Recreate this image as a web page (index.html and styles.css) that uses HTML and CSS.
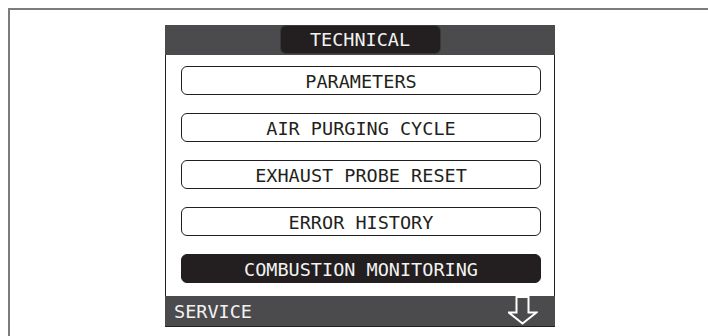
FILE: index.html
```html
<!DOCTYPE html>
<html>
<head>
<meta charset="utf-8">
<link rel="stylesheet" href="styles.css">
</head>
<body>
<div class="frame">
  <div class="screen">
    <div class="header"><div class="title">TECHNICAL</div></div>
    <div class="content">
      <div class="btn">PARAMETERS</div>
      <div class="btn">AIR PURGING CYCLE</div>
      <div class="btn">EXHAUST PROBE RESET</div>
      <div class="btn">ERROR HISTORY</div>
      <div class="btn selected">COMBUSTION MONITORING</div>
    </div>
    <div class="footer">
      <span class="service">SERVICE</span>
      <svg class="arrow" width="30" height="29" viewBox="0 0 30 29">
        <polygon points="8.5,1 20.5,1 20.5,16.5 28.5,16.5 14.5,27.5 0.8,16.5 8.5,16.5" fill="none" stroke="#ffffff" stroke-width="2" stroke-linejoin="miter"/>
      </svg>
    </div>
  </div>
</div>
</body>
</html>
```
FILE: styles.css
```css
html, body {
  margin: 0;
  padding: 0;
  background: #ffffff;
}
body {
  width: 708px;
  height: 336px;
  overflow: hidden;
  font-family: "DejaVu Sans Mono", "Liberation Mono", monospace;
}
.frame {
  margin: 8px 0 0 8px;
  border-top: 2px solid #7c7c7c;
  border-left: 2px solid #7c7c7c;
  height: 328px;
  overflow: hidden;
  padding: 15px 0 0 155px;
  box-sizing: border-box;
}
.screen {
  width: 390px;
  display: flex;
  flex-direction: column;
}
.header {
  height: 30px;
  background: #4b4b4d;
  display: flex;
  justify-content: center;
  padding-top: 1px;
  box-sizing: border-box;
}
.title {
  width: 159px;
  height: 27px;
  background: #231f20;
  border-radius: 5px;
  color: #f2f2f2;
  font-size: 18.5px;
  display: flex;
  align-items: center;
  justify-content: center;
  box-shadow: 0 0 0 1px #3a3839;
}
.content {
  border-left: 1px solid #231f20;
  border-right: 1px solid #231f20;
  padding: 11px 13px 13px 15px;
  display: flex;
  flex-direction: column;
  gap: 18px;
  background: #fff;
}
.btn {
  height: 29px;
  border: 1px solid #231f20;
  border-radius: 6px;
  box-sizing: border-box;
  display: flex;
  align-items: center;
  justify-content: center;
  color: #231f20;
  font-size: 18.5px;
  padding-top: 1px;
}
.btn.selected {
  background: #231f20;
  color: #f2f2f2;
}
.footer {
  height: 31px;
  background: #4b4b4d;
  border-bottom: 1px solid #231f20;
  box-sizing: border-box;
  display: flex;
  align-items: center;
  justify-content: space-between;
  padding: 0 17px 0 9px;
}
.service {
  color: #f2f2f2;
  font-size: 18.5px;
  padding-top: 1px;
}
.arrow {
  display: block;
  align-self: flex-start;
}
```
